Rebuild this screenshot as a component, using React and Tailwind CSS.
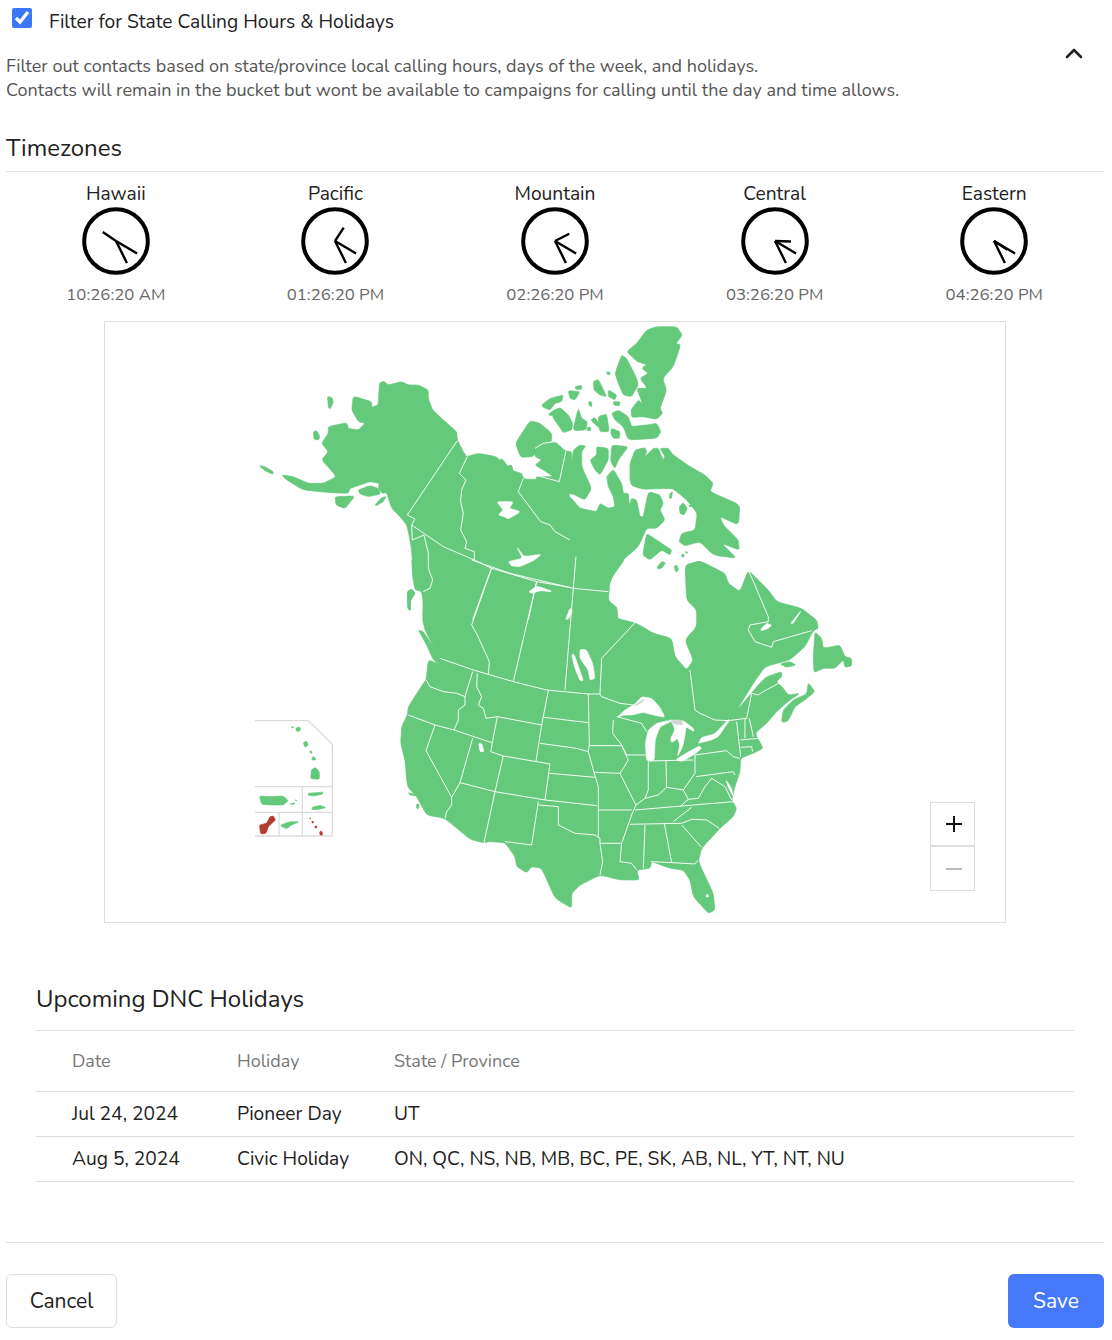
import { useMemo } from 'react'

const FONT = 'font-["Nunito","Lato","Noto_Sans",sans-serif]'

const zones = [
  { name: 'Hawaii', time: '10:26:20 AM', hour: 304 },
  { name: 'Pacific', time: '01:26:20 PM', hour: 33 },
  { name: 'Mountain', time: '02:26:20 PM', hour: 63 },
  { name: 'Central', time: '03:26:20 PM', hour: 92 },
  { name: 'Eastern', time: '04:26:20 PM', hour: 123 },
]

const holidays = [
  { date: 'Jul 24, 2024', name: 'Pioneer Day', where: 'UT' },
  { date: 'Aug 5, 2024', name: 'Civic Holiday', where: 'ON, QC, NS, NB, MB, BC, PE, SK, AB, NL, YT, NT, NU' },
]

function Clock({ hour }) {
  const hands = useMemo(() => {
    const end = (deg, len) => {
      const r = (deg * Math.PI) / 180
      return { x2: 34 + Math.sin(r) * len, y2: 34 - Math.cos(r) * len }
    }
    return [end(hour, 16), end(120.6, 24.5), end(153.5, 24.5)]
  }, [hour])
  return (
    <svg viewBox="0 0 68 68" className="h-[68px] w-[68px]">
      <circle cx="34" cy="34" r="31.8" fill="none" stroke="#000" strokeWidth="4" />
      {hands.map((h, i) => (
        <line key={i} x1="34" y1="34" {...h} stroke="#000" strokeWidth="2.4" />
      ))}
    </svg>
  )
}

// zoom-crop coordinates, 3 units to a page pixel
const westLand = [
  '388,190 400,183 415,195 455,185 475,195 505,195 535,210 535,235 548,270 580,300 620,335 622,360 640,395 650,410 685,400 740,410 765,440 785,435 790,455 815,465 822,478 960,478 960,900 525,900 517,820 490,780 485,690 478,650 470,615 450,590 425,565 410,518 397,520 385,505 388,490 360,485 330,495 300,505 295,520 240,518 160,510 110,480 95,465 130,470 175,490 220,490 260,470 215,420 235,395 215,370 235,340 235,320 290,308 295,325 325,330 345,310 325,305 305,270 310,228 365,245 365,262 385,255',
  '190,335 200,332 210,350 205,360 192,358',
  '232,230 245,232 250,245 242,265 236,265',
  '28,437 45,440 70,455 68,463 45,452',
  '255,530 315,528 285,566 258,555',
  '325,510 360,497 385,505 392,522 355,530 330,522',
  '375,555 395,533 408,530 400,545 380,557',
  '472,815 485,808 495,820 482,840 480,872 473,865',
]

const westLakes = [
  '740,545 790,545 778,565 812,575 775,597 762,590 745,585 760,570',
  '800,680 822,710 875,703 850,722 810,740 785,738 775,725 818,715',
  '835,818 860,798 908,815 860,808',
]

const westLines = [
  '622,362 472,585 495,597 485,615 487,660 522,645 535,700 535,745 548,780 540,805 520,815',
  '652,410 628,460 648,480 635,510 632,545 640,580 632,630 650,665 645,685 673,695 673,720',
  '485,615 580,680 673,720 725,745 860,785 960,802',
  '820,475 805,515 872,605 900,615 915,635 960,660',
  '724,745 668,900',
  '860,785 835,900',
]

const arcticLand = [
  '0,415 10,420 30,450 65,460 70,475 100,490 130,525 110,535 120,545 175,548 185,575 185,550 210,530 240,565 290,575 300,550 325,565 345,560 340,530 325,500 320,470 340,448 365,490 370,520 385,520 388,555 395,535 410,540 420,590 430,590 445,515 480,525 490,550 480,570 495,600 470,625 440,625 415,680 380,710 350,740 325,800 323,845 350,860 355,900 0,900',
  '380,95 410,70 440,30 470,20 530,20 547,45 528,70 542,75 520,140 488,175 500,210 480,265 488,280 470,298 430,290 395,292 393,270 415,240 428,252 410,205 442,205 420,175 445,160 425,145 462,115 445,135 412,125',
  '345,160 365,105 380,115 410,175 415,195 395,230 370,225 355,190',
  '335,280 355,270 385,290 395,320 440,315 470,310 483,335 470,355 385,360 370,320 345,300',
  '125,255 150,235 190,225 185,245 165,250 150,270 130,262',
  '145,282 165,270 165,280 152,288',
  '155,275 180,262 205,285 218,310 215,330 190,338 178,320 160,295',
  '220,325 235,265 245,295 262,305 258,330 225,332',
  '261,322 272,322 272,332 262,332',
  '272,300 285,292 300,318 295,322',
  '295,290 320,282 328,335 300,335 295,310',
  '205,212 240,215 225,240 210,235',
  '225,200 245,196 245,208 228,208',
  '280,185 295,178 320,230 300,225 282,210',
  '325,210 350,225 345,240 325,230',
  '340,245 360,245 358,258 342,255',
  '266,245 274,245 276,260 268,258',
  '320,155 330,157 330,164 322,163',
  '335,325 360,335 358,355 340,355 332,340',
  '90,302 120,310 155,340 155,365 120,375 100,410 62,412 46,370',
  '105,385 130,370 165,365 195,392 215,395 215,430 220,390 240,375 257,378 245,395 245,440 275,505 255,540 215,520 135,528 128,505 105,470 160,470 130,450 105,435 125,420 105,410',
  '270,420 290,405 290,380 325,385 325,420 300,465 285,450',
  '335,375 385,380 355,420 345,445 332,425',
  '390,480 390,430 405,390 435,383 440,395 425,440 435,410 460,385 475,385 490,420 495,410 480,385 505,385 520,405 570,440 615,465 640,490 630,515 720,555 715,615 660,590 670,615 715,660 718,690 665,670 710,715 640,705 600,665 555,678 537,665 545,640 585,630 592,580 560,540 530,515 515,505 430,508 395,497',
  '538,560 550,548 562,565 552,585 540,580',
  '510,520 518,515 514,535 508,535',
  '428,705 440,640 470,660 515,690 510,705 485,690 450,720',
  '472,740 485,725 497,728 485,745 473,747',
  '522,740 530,735 536,750 528,757',
  '545,705 552,702 552,712 545,710',
  '555,695 565,697 560,700',
  '565,556 575,558 572,562',
]

const arcticLines = [
  '105,465 178,485 198,392',
  '105,385 130,370 165,365',
]

const southLand = [
  '35,-10 38,50 45,90 70,95 68,180 75,210 100,260 120,295 118,312 85,300 78,360 70,370 25,440 22,465 5,500 2,550 15,600 22,680 50,710 80,765 135,775 210,838 250,848 270,845 315,848 345,890 350,920 380,938 395,920 425,925 465,1015 515,1045 515,1000 540,975 600,945 660,960 718,960 710,930 750,925 755,905 810,925 850,930 870,960 880,1010 925,1060 945,1050 940,1000 895,905 905,865 960,805 1000,770 1010,745 995,720 1005,680 1020,635 1022,595 1060,580 1090,565 1065,520 1100,490 1130,455 1170,420 1200,400 1165,405 1150,385 1130,365 1145,350 1145,335 1100,350 1075,375 1008,455 1060,370 1095,320 1170,300 1215,260 1240,212 1255,205 1250,180 1205,145 1130,125 1105,90 1045,30 1020,95 985,70 975,40 900,2 855,15 860,120 890,150 890,200 855,240 880,300 860,330 825,290 815,235 760,220 710,190 650,175 645,140 625,120 630,60 680,-10',
  '22,95 35,88 45,98 30,125 32,152 24,145',
  '55,210 70,215 100,260 122,295 118,312 100,300 80,255',
  '1145,482 1150,450 1180,420 1220,402 1225,368 1245,395 1215,420 1185,440 1165,482 1150,487',
  '1140,312 1170,305 1188,315 1160,322',
  '1242,338 1240,290 1245,215 1265,235 1270,265 1320,255 1335,290 1355,295 1355,318 1335,322 1330,300 1305,325 1270,325',
  '25,698 40,702 46,708 30,705',
  '50,733 58,733 55,746 50,745',
]

const southLakes = [
  '515,285 522,282 550,362 540,362 525,325',
  '540,268 560,270 578,310 585,355 570,360 565,330 540,295',
  '388,95 410,80 458,95 420,92 395,100',
  '497,178 510,145 518,150 505,178',
  '236,550 246,552 252,575 240,575',
  '1082,208 1100,190 1115,195 1105,205 1085,212',
  '1172,190 1205,150 1180,190',
  '825,285 845,285 860,300 845,302',
  '919,1004 925,1004 925,1011 919,1011',
]

// Great Lakes and the Chesapeake, traced at the tighter crop
const greatLakes = [
  '52,112 75,90 105,72 125,50 155,55 178,80 195,112 160,105 130,97 95,105 70,105',
  '140,242 136,190 145,150 170,130 205,122 210,126 180,140 165,180 163,242',
  '205,120 250,122 280,145 282,155 258,140 255,165 248,200 232,230 240,195 232,175 215,188 212,175 225,150 218,130',
  '228,238 262,218 298,198 305,205 280,225 245,245',
  '295,190 305,172 345,162 385,118 388,122 355,170 335,180 300,188',
  '378,300 395,325 400,350 385,322',
]

const lakeGrey = [
  '210,122 245,120 248,135 225,132',
  '105,75 130,58 132,62 108,78',
]

const southLines = [
  '120,295 220,330 340,365 440,390 565,402 600,402 605,410 660,430 700,435',
  '870,330 885,450 900,460 945,480 985,482 1040,475 1055,400 1075,405 1090,395 1145,365',
  '78,360 90,380 130,395 170,400 195,410',
  '218,335 195,410 195,435 175,450 175,480 162,510',
  '25,465 105,495 162,510 275,548',
  '105,495 78,572 155,712 155,735 140,755 135,775',
  '155,712 180,668 285,695 435,720 590,737',
  '218,535 180,668',
  '232,340 230,380 245,410 235,435 250,445 258,475 292,470 425,495',
  '292,470 272,575 310,588 450,612 435,720',
  '445,392 425,495 408,603',
  '432,472 565,488',
  '420,550 530,565 565,575',
  '310,588 285,695 252,848',
  '415,725 395,855 315,845',
  '415,735 475,740 475,795 525,820 585,825 600,835 600,850 608,905 600,945',
  '448,640 585,652',
  '565,575 582,637 595,680 595,830',
  '565,402 568,555 565,575',
  '568,557 665,557 685,600 670,625 660,640 690,700 708,735 695,765 665,850 600,850',
  '582,637 660,640',
  '595,750 695,750',
  '665,850 660,905 695,910 710,930',
  '735,795 730,925',
  '690,793 845,790 875,778 920,780 958,805',
  '793,790 815,908',
  '752,905 815,908 885,912 895,900',
  '845,795 905,862',
  '705,750 1000,725',
  '875,742 820,785',
  '708,735 735,715 775,705 800,682 850,690 865,718 840,740',
  '680,585 738,585',
  '640,480 638,520 665,555 680,585',
  '650,470 725,490 740,515',
  '745,605 745,690 735,715',
  '745,603 880,600',
  '798,603 800,682',
  '885,585 885,640 850,690',
  '865,718 895,715 915,680 935,655 975,680 995,720',
  '885,585 980,572 1000,590 1020,595',
  '888,650 1000,635 1005,645',
  '1010,485 1022,590',
  '1035,475 1035,535',
  '1048,475 1060,530',
  '1022,540 1075,535',
  '1022,562 1055,560 1058,575',
  '600,402 605,295 708,185',
  '275,25 215,195 232,225 268,305 265,345',
  '410,65 340,365',
  '528,-10 520,85 515,145 495,390',
  '215,0 330,40 520,85 625,95',
  '1045,30 1065,75 1075,100 1105,170 1105,185 1050,195 1045,210 1065,245 1115,262 1120,245 1235,212',
]

const insetLines = [
  '15,32 175,32 247,103 247,378 15,378',
  '15,230 247,230',
  '15,307 247,307',
  '157,230 157,378',
  '87,307 87,378',
]

const insetGreen = [
  '138,55 148,50 152,60 145,65 138,62',
  '160,98 170,93 175,105 165,112',
  '180,122 186,125 185,131 180,128',
  '186,143 192,140 198,150 186,150',
  '184,180 196,172 208,185 208,208 182,206',
  '125,50 130,50 130,54 125,53',
  '28,258 60,260 100,258 115,272 100,285 60,285 35,283',
  '120,282 135,278 130,284',
  '135,270 140,270 140,273',
  '174,250 200,248 218,246 218,252 192,258 175,256',
  '186,292 210,286 228,293 205,298 186,299',
  '93,345 120,335 130,335 148,335 125,345 110,356 95,350',
]

const insetRed = [
  '28,345 50,340 60,320 70,318 77,330 55,350 48,370 32,372',
  '209,365 216,364 218,375 210,375',
  '195,348 200,348 200,354 195,354',
  '186,334 190,334 190,339 186,339',
  '178,324 182,324 181,327',
]

// take the hard corner off a traced outline, keeping most of each segment straight
function smooth(points) {
  const pts = points.split(' ').map((p) => p.split(',').map(Number))
  const toward = (a, b, t) => [a[0] + (b[0] - a[0]) * t, a[1] + (b[1] - a[1]) * t]
  const n = pts.length
  let d = ''
  pts.forEach((p, i) => {
    const a = toward(p, pts[(i + n - 1) % n], 0.2)
    const b = toward(p, pts[(i + 1) % n], 0.2)
    d += `${i ? 'L' : 'M'}${a[0]} ${a[1]}Q${p[0]} ${p[1]} ${b[0]} ${b[1]}`
  })
  return d + 'Z'
}

function Shapes({ list, fill, x, y }) {
  return (
    <g transform={`translate(${x} ${y}) scale(0.3333)`}>
      {list.map((p, i) => (
        <path key={i} d={smooth(p)} fill={fill} stroke={fill} strokeWidth="2" strokeLinejoin="round" />
      ))}
    </g>
  )
}

function Lines({ list, x, y, stroke = '#fff', width = 2.8 }) {
  return (
    <g transform={`translate(${x} ${y}) scale(0.3333)`}>
      {list.map((p, i) => (
        <polyline key={i} points={p} fill="none" stroke={stroke} strokeWidth={width} strokeLinejoin="round" />
      ))}
    </g>
  )
}

function DncMap() {
  const green = '#64c97b'
  return (
    <svg viewBox="105 322 900 600" className="block h-[600px] w-[900px]">
      <Shapes list={westLand} fill={green} x={250} y={320} />
      <Shapes list={arcticLand} fill={green} x={500} y={320} />
      <Shapes list={southLand} fill={green} x={400} y={560} />
      <Shapes list={westLakes} fill="#fff" x={250} y={320} />
      <Shapes list={southLakes} fill="#fff" x={400} y={560} />
      <Lines list={westLines} x={250} y={320} />
      <Lines list={arcticLines} x={500} y={320} />
      <Lines list={southLines} x={400} y={560} />
      <Shapes list={greatLakes} fill="#fff" x={600} y={680} />
      <Shapes list={lakeGrey} fill="#d4d4d4" x={600} y={680} />
      <Lines list={insetLines} x={250} y={710} stroke="#dcdcdc" width={4} />
      <Shapes list={insetGreen} fill={green} x={250} y={710} />
      <Shapes list={insetRed} fill="#b23c2f" x={250} y={710} />
    </svg>
  )
}

export default function App() {
  return (
    <div className={`${FONT} h-[1340px] w-[1112px] bg-white pl-1.5 pr-2 text-[#212121]`}>
      <div className="flex h-[44px] items-start">
        <input type="checkbox" defaultChecked className="ml-1.5 mt-2 h-5 w-5 accent-[#3b78f6]" />
        <span className="ml-[17px] mt-[10px] text-[19.2px] leading-6">Filter for State Calling Hours &amp; Holidays</span>
      </div>

      <div className="flex h-[78px] items-start justify-between">
        <p className="mt-[10px] text-lg leading-6 text-[#555]">
          Filter out contacts based on state/province local calling hours, days of the week, and holidays.
          <br />
          Contacts will remain in the bucket but wont be available to campaigns for calling until the day and time allows.
        </p>
        <svg viewBox="0 0 18 12" className="mr-[21px] mt-[3px] h-3 w-[18px]" fill="none">
          <path d="M2 10l7-7 7 7" stroke="#222" strokeWidth="2.6" strokeLinecap="round" strokeLinejoin="round" />
        </svg>
      </div>

      <div className="flex h-[50px] items-center border-b border-[#e2e2e2] pt-0.5 text-2xl">Timezones</div>

      <div className="grid h-[149px] grid-cols-5">
        {zones.map((z) => (
          <div key={z.name} className="flex flex-col items-center pt-[10px]">
            <div className="h-[25px] text-[19.2px] leading-6">{z.name}</div>
            <Clock hour={z.hour} />
            <div className="mt-[8px] text-[16.8px] leading-6 text-[#666]">{z.time}</div>
          </div>
        ))}
      </div>

      <div className="relative mx-auto h-[602px] w-[902px] border border-[#ddd]">
        <DncMap />
        <div className="absolute left-[825px] top-[480px] w-[45px] border border-[#ddd] bg-white">
          <button className="flex h-[44px] w-full items-center justify-center border-b-2 border-[#ddd] pl-[2px]">
            <svg viewBox="0 0 18 18" className="h-[18px] w-[18px]">
              <path d="M9 1v16M1 9h16" stroke="#111" strokeWidth="2" />
            </svg>
          </button>
          <button className="flex h-[43px] w-full items-center justify-center pl-[2px]">
            <svg viewBox="0 0 18 18" className="h-[18px] w-[18px]">
              <path d="M1 9h16" stroke="#bbb" strokeWidth="2" />
            </svg>
          </button>
        </div>
      </div>

      <div className="mx-[30px] mt-[56px]">
        <h2 className="h-[51px] text-2xl leading-10">Upcoming DNC Holidays</h2>
        <div className="border-t border-[#ddd]">
          <div className="flex h-[61px] items-center border-b border-[#ddd] pl-9 text-lg text-[#777]">
            <div className="w-[165px]">Date</div>
            <div className="w-[157px]">Holiday</div>
            <div>State / Province</div>
          </div>
          {holidays.map((h) => (
            <div key={h.date} className="flex h-[45px] items-center border-b border-[#ddd] pl-9 text-[19.2px]">
              <div className="w-[165px]">{h.date}</div>
              <div className="w-[157px]">{h.name}</div>
              <div>{h.where}</div>
            </div>
          ))}
        </div>
      </div>

      <div className="mt-[60px] flex items-center justify-between border-t border-[#e2e2e2] pt-[31px]">
        <button className="h-[54px] w-[111px] rounded-md border border-[#ddd] bg-white pt-0.5 text-[21px]">Cancel</button>
        <button className="h-[54px] w-[96px] rounded-md bg-[#4679fa] pt-0.5 text-[21px] text-white">Save</button>
      </div>
    </div>
  )
}
